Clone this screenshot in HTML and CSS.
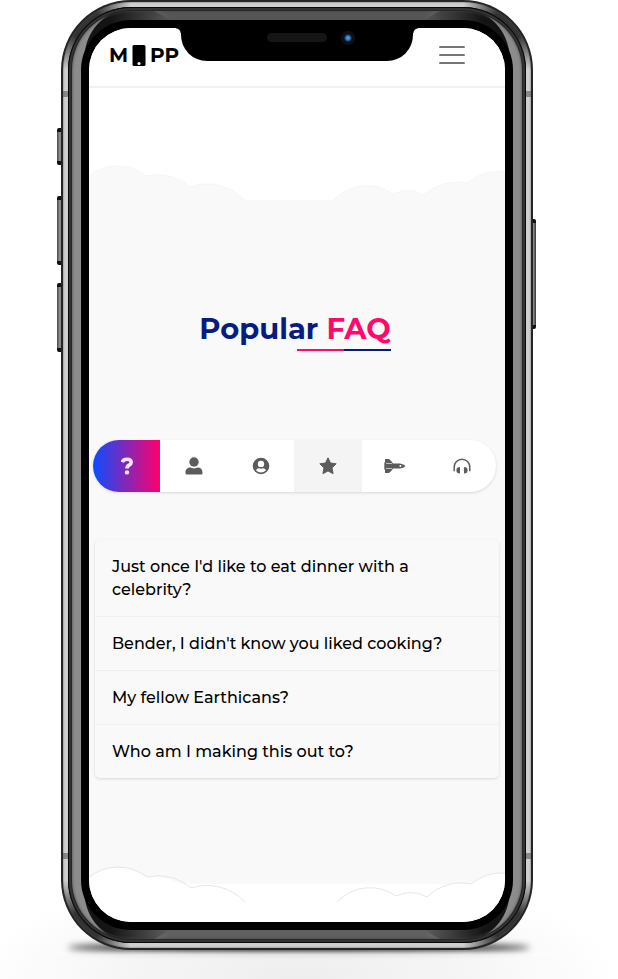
FILE: index.html
```html
<!DOCTYPE html>
<html lang="en">
<head>
<meta charset="utf-8">
<meta name="viewport" content="width=device-width, initial-scale=1">
<title>Mapp – Popular FAQ</title>
<link rel="stylesheet" href="styles.css">
</head>
<body>
<div class="stage">
<div class="phone">
  <span class="key key-mute"></span>
  <span class="key key-up"></span>
  <span class="key key-down"></span>
  <span class="key key-power"></span>
  <div class="rim"><div class="steel"><div class="groove"><div class="band"><div class="bezel">
  <div class="screen">
    <div class="notch"><span class="speaker"></span><span class="camera"></span></div>
    <header class="topbar">
      <a class="logo" href="#" aria-label="Mapp"><span>M</span><svg width="14" height="21" viewBox="0 0 14 21" aria-hidden="true"><rect x="0.500" width="13" height="21" rx="1.500"/><circle cx="7" cy="18.500" r="1.500" fill="#fff"/></svg><span>PP</span></a>
      <button class="menu" aria-label="Open menu"><i></i><i></i><i></i></button>
    </header>
    <main>
      <svg class="clouds" viewBox="0 0 416 113" preserveAspectRatio="none" aria-hidden="true"><path fill="#f9f9f9" stroke="#f5f5f5" d="M-1 88A47 47 0 0 1 57 88A50 50 0 0 1 101 99A50 50 0 0 1 156 113H244A45 45 0 0 1 304 106A34 34 0 0 1 335 107A48 48 0 0 1 378 95A50 50 0 0 1 417 84V114H-1Z"/></svg>
      <section class="faq">
        <h1>Popular <span>FAQ</span></h1>
        <div class="tabs" role="tablist">
          <button class="tab active" role="tab" aria-selected="true" aria-label="General"><svg width="12" height="18" viewBox="0 0 12 18"><path d="M1.200 5.200Q2.200 2.200 5.800 2.200Q10.200 2.200 10.200 5.300Q10.200 7.100 8.200 8.200Q6 9.200 6 11.500" fill="none" stroke="currentColor" stroke-width="3.600"/><circle cx="6" cy="15.400" r="2.200"/></svg></button>
          <button class="tab" role="tab" aria-label="Account"><svg width="18" height="18" viewBox="0 0 18 18"><circle cx="9" cy="5" r="4.700"/><path d="M.500 15.500C.500 12.500 2.700 10.600 5.300 10.600Q9 12.200 12.700 10.600C15.500 10.600 17.500 12.500 17.500 15.500V16.300Q17.500 17.500 16.300 17.500H1.700Q.500 17.500.500 16.300Z"/></svg></button>
          <button class="tab" role="tab" aria-label="Profile"><svg width="18" height="18" viewBox="0 0 18 18"><path fill-rule="evenodd" d="M9 .700A8.300 8.300 0 1 1 9 17.300A8.300 8.300 0 0 1 9 .700ZM9 3.700A3.200 3.200 0 1 0 9 10.100A3.200 3.200 0 1 0 9 3.700ZM3.900 13.200Q8.900 18 14.100 13.200Q12.700 11.200 11 11.300Q9 12 7 11.300Q5.200 11.200 3.900 13.200Z"/></svg></button>
          <button class="tab hovered" role="tab" aria-label="Favorites"><svg width="18" height="18" viewBox="0 0 18 18"><path stroke="currentColor" stroke-linejoin="round" d="M9 .800 11.500 6 17.200 6.800 13 10.800 14.100 16.700 9 13.900 3.900 16.700 5 10.800.800 6.800 6.500 6Z"/></svg></button>
          <button class="tab" role="tab" aria-label="Launch"><svg width="22" height="16" viewBox="0 0 22 16"><path fill-rule="evenodd" d="M1 1H5Q7 2 9 5.500H16Q20 6 21.500 8Q20 10 16 10.500H9Q7 14 5 15H1V11.500H.300V4.500H1ZM16.400 7A1 1 0 1 0 16.400 9A1 1 0 0 0 16.400 7Z"/><path d="M2 5.500H8M2 10.500H8" stroke="#fff" stroke-width=".600"/></svg></button>
          <button class="tab" role="tab" aria-label="Support"><svg width="18" height="16" viewBox="0 0 18 16"><path d="M1.200 13.200V9A7.800 7.800 0 0 1 16.800 9V13.200" fill="none" stroke="currentColor" stroke-width="1.500"/><path d="M3.400 12.200Q3.400 9 7 9V15.500Q3.400 15.500 3.400 12.200ZM14.600 12.200Q14.600 9 11 9V15.500Q14.600 15.500 14.600 12.200Z"/></svg></button>
        </div>
        <div class="accordion">
          <h2><button aria-expanded="false">Just once I'd like to eat dinner with a celebrity?</button></h2>
          <h2><button aria-expanded="false">Bender, I didn't know you liked cooking?</button></h2>
          <h2><button aria-expanded="false">My fellow Earthicans?</button></h2>
          <h2><button aria-expanded="false">Who am I making this out to?</button></h2>
        </div>
      </section>
      <svg class="clouds foot" viewBox="0 0 416 57" preserveAspectRatio="none" aria-hidden="true"><path fill="#fff" d="M-1 13A47 47 0 0 1 58 12A50 50 0 0 1 91 19H382A50 50 0 0 1 417 8V58H-1Z"/><path fill="none" stroke="#e6e6e6" d="M-1 13A47 47 0 0 1 58 12A50 50 0 0 1 102 23A52 52 0 0 1 156 37M248 37A45 45 0 0 1 307 31A34 34 0 0 1 338 32A48 48 0 0 1 382 19A50 50 0 0 1 417 8"/></svg>
    </main>
  </div>
  </div></div></div></div></div>
</div>
</div>
</body>
</html>
```
FILE: styles.css
```css
* { box-sizing: border-box; }

body {
  margin: 0;
  background: #fff;
  color: #000;
  font-family: Montserrat, Inter, "Open Sans", sans-serif;
}

button { border: 0; background: none; font: inherit; color: inherit; padding: 0; }

.stage {
  position: relative;
  padding: 0 85px 29px 61px;
  overflow: hidden;
}

/* floor under the handset */
.stage::before {
  content: "";
  position: absolute;
  inset: auto 0 0 0;
  height: 110px;
  background:
    linear-gradient(90deg, #fff0, #fff 20%, #fff 80%, #fff0) 50% calc(100% - 23px) / 86% 4px no-repeat,
    radial-gradient(ellipse 52% 100% at 48% 100%, #eee 0, #f5f5f5 50%, #fff0 100%);
}
.stage::after {
  content: "";
  position: absolute;
  left: 68px;
  right: 88px;
  bottom: 29px;
  height: 5px;
  border-radius: 50%;
  background: #000;
  box-shadow: 0 0 4px #000;
  filter: blur(3px);
}

/* handset body, built from nested rings */
.phone { position: relative; z-index: 1; }
.rim {
  position: relative;
  padding: 2px;
  border-radius: 70px;
  background: #252525;
}
.steel {
  padding: 5px;
  border-radius: 68px;
  background:
    linear-gradient(#888, #888) 0 89px / 100% 6px no-repeat,
    linear-gradient(#888, #888) 0 calc(100% - 89px) / 100% 6px no-repeat,
    radial-gradient(circle at 21px 21px, #333 0 16px, #3330 50px),
    radial-gradient(circle at calc(100% - 21px) 21px, #333 0 16px, #3330 50px),
    radial-gradient(circle at 21px calc(100% - 21px), #333 0 16px, #3330 50px),
    radial-gradient(circle at calc(100% - 21px) calc(100% - 21px), #333 0 16px, #3330 50px),
    #cfcfcf;
  box-shadow: inset 0 0 2px #555;
}
.groove {
  padding: 4px;
  border-radius: 63px;
  background: #262626;
  box-shadow: inset 0 0 0 1px #080808, inset 0 0 0 3px #333;
}
.band {
  padding: 9px;
  border-radius: 59px;
  background:
    linear-gradient(90deg, #5550, #555 60px, #555 calc(100% - 60px), #5550) 50% 0 / calc(100% - 76px) 18px no-repeat,
    linear-gradient(90deg, #6060, #606060 60px, #606060 calc(100% - 60px), #6060) 50% 100% / calc(100% - 76px) 18px no-repeat,
    radial-gradient(circle at 63px 47px, #141414 50px, #1410 51px),
    radial-gradient(circle at calc(100% - 63px) 47px, #141414 50px, #1410 51px),
    radial-gradient(circle at 63px calc(100% - 47px), #141414 50px, #1410 51px),
    radial-gradient(circle at calc(100% - 63px) calc(100% - 47px), #141414 50px, #1410 51px),
    #8c8c8c;
  box-shadow: inset 0 0 3px #444;
}
.bezel {
  padding: 8px;
  border-radius: 50px;
  background: #000;
}
.screen {
  position: relative;
  overflow: hidden;
  border-radius: 42px;
  background: #f9f9f9;
}

.key {
  position: absolute;
  left: -4px;
  width: 6px;
  background: linear-gradient(90deg, #444, #999 50%, #333);
  border-block: 4px solid #111;
  border-radius: 2px;
}
.key-mute { top: 128px; height: 37px; }
.key-up { top: 196px; height: 69px; }
.key-down { top: 283px; height: 69px; }
.key-power { left: auto; right: -3px; top: 219px; height: 110px; }

.notch {
  position: absolute;
  top: -1px;
  left: calc(50% - 116px);
  width: 232px;
  height: 34px;
  border-radius: 0 0 26px 26px;
  background: #000;
}
.notch::before,
.notch::after {
  content: "";
  position: absolute;
  top: 1px;
  width: 5px;
  height: 5px;
}
.notch::before { left: -5px; background: radial-gradient(circle at 0 100%, #0000 4px, #000 5px); }
.notch::after { right: -5px; background: radial-gradient(circle at 100% 100%, #0000 4px, #000 5px); }
.speaker {
  position: absolute;
  left: 86px;
  top: 6px;
  width: 60px;
  height: 9px;
  border-radius: 5px;
  background: #151515;
}
.camera {
  position: absolute;
  left: 160px;
  top: 4px;
  width: 14px;
  height: 14px;
  border-radius: 50%;
  background: radial-gradient(circle, #4d9be0 0 1px, #1d4a85 3px, #0a0f18 4px, #101010 7px);
}

.topbar {
  display: flex;
  justify-content: space-between;
  align-items: center;
  height: 60px;
  padding: 0 40px 4px 20px;
  background: #fff;
  border-bottom: 2px solid #f1f1f1;
}
.logo {
  display: flex;
  align-items: center;
  gap: 4px;
  color: #000;
  font-size: 20px;
  font-weight: 700;
  text-decoration: none;
}
.menu { display: grid; gap: 6px; width: 26px; }
.menu i { height: 2px; background: #777; border-radius: 1px; }

.clouds { display: block; width: 100%; height: 113px; background: #fff; }
.clouds.foot { height: 57px; background: none; }

.faq {
  display: flex;
  flex-direction: column;
  padding: 110px 6px 87px;
}
h1 {
  position: relative;
  align-self: center;
  margin: 0 4px 89px 0;
  padding-bottom: 4px;
  color: #061c80;
  font-size: 29px;
  line-height: 36px;
  font-weight: 700;
}
h1 span { color: #ff0a6c; }
h1::after {
  content: "";
  position: absolute;
  right: 0;
  bottom: 0;
  width: 94px;
  height: 2px;
  background: linear-gradient(90deg, #ff0a6c 50%, #061c80 50%);
}

.tabs {
  display: grid;
  grid-template-columns: repeat(6, 1fr);
  margin: 0 3px 48px -2px;
  height: 52px;
  overflow: hidden;
  border-radius: 27px;
  background: #fff;
  box-shadow: 0 1px 3px #0002;
}
.tab { display: grid; place-items: center; color: #5c5c5c; }
.tab svg { fill: currentColor; }
.tab.active { color: #fbe9fb; background: linear-gradient(90deg, #0b4dff, #ff006c); }
.tab.hovered { background: #f4f4f4; }

.accordion { display: grid; border-radius: 5px; box-shadow: 0 1px 3px #0002; }
.accordion h2 { margin: 0; border-top: 1px solid #f0f0f0; }
.accordion h2:first-child { border-top: 0; }
.accordion button {
  display: block;
  width: 100%;
  padding: 15px 56px 15px 17px;
  font-size: 16px;
  line-height: 23px;
  font-weight: 500;
  text-align: left;
}
```
